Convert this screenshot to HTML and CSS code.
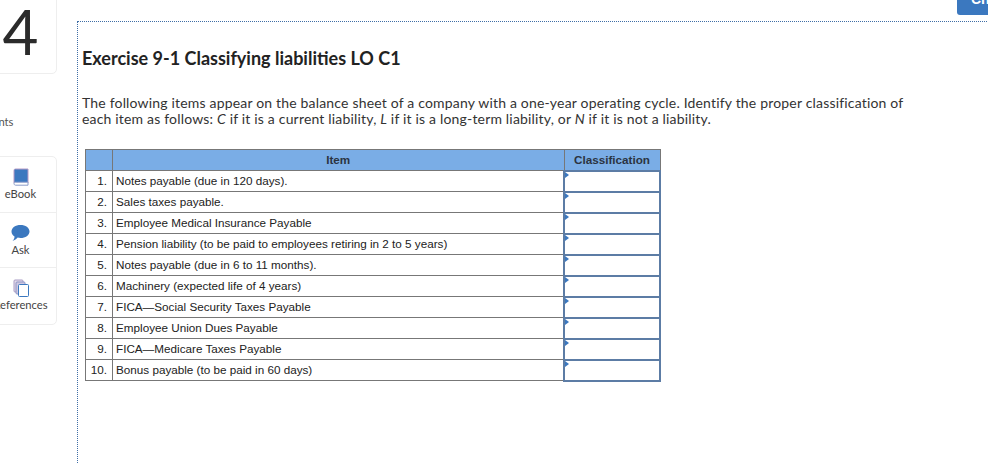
FILE: index.html
```html
<!DOCTYPE html>
<html lang="en">
<head>
<meta charset="utf-8">
<title>Exercise 9-1</title>
<link rel="stylesheet" href="styles.css">
</head>
<body>
<div class="page">
  <aside class="side">
    <div class="num-card"><span class="num">4</span></div>
    <div class="points">Points</div>
    <nav class="tools">
      <div class="tool">
        <svg class="ico" width="16" height="18" viewBox="0 0 16 18"><path d="M1 15V2.500C1 1.500 1.600 1 2.500 1H15v14z" fill="#3b78bf" stroke="#b59ac6"/><path d="M1 15.500C1 14.500 1.700 14.200 2.600 14.200H15v3H2.600C1.700 17.200 1 16.500 1 15.500z" fill="#fff" stroke="#8a9cc9"/></svg>
        <span>eBook</span>
      </div>
      <div class="tool">
        <svg class="ico" width="19" height="18" viewBox="0 0 19 18"><path d="M9.500 1C14.500 1 18.500 3.700 18.500 7.500S14.500 14 9.500 14C8.500 14 7.500 13.900 6.700 13.600C5.500 15 3.800 16.500 1.500 17C3 15.500 3.500 14 3.500 12.500C1.500 11.300.5 9.500.5 7.500.5 3.700 4.500 1 9.500 1z" fill="#3b78bf"/></svg>
        <span>Ask</span>
      </div>
      <div class="tool">
        <svg class="ico" width="16" height="18" viewBox="0 0 16 18"><rect x="1" y="1" width="9" height="12" rx="1" fill="#e4dcec" stroke="#a99cc4"/><rect x="3" y="3" width="9" height="12" rx="1" fill="#cfc8e2" stroke="#8f95c4"/><rect x="5.500" y="5.500" width="10" height="12" rx="1" fill="#fff" stroke="#3b78bf"/></svg>
        <span>References</span>
      </div>
    </nav>
  </aside>
  <main class="main">
    <h1 class="title">Exercise 9-1 Classifying liabilities LO C1</h1>
    <p class="intro">The following items appear on the balance sheet of a company with a one-year operating cycle. Identify the proper classification of each item as follows: <i>C</i> if it is a current liability, <i>L</i> if it is a long-term liability, or <i>N</i> if it is not a liability.</p>
    <table class="grid">
      <thead>
        <tr><th class="c-n"></th><th class="c-item">Item</th><th class="c-class">Classification</th></tr>
      </thead>
      <tbody>
        <tr><td class="c-n">1.</td><td>Notes payable (due in 120 days).</td><td class="ans"></td></tr>
        <tr><td class="c-n">2.</td><td>Sales taxes payable.</td><td class="ans"></td></tr>
        <tr><td class="c-n">3.</td><td>Employee Medical Insurance Payable</td><td class="ans"></td></tr>
        <tr><td class="c-n">4.</td><td>Pension liability (to be paid to employees retiring in 2 to 5 years)</td><td class="ans"></td></tr>
        <tr><td class="c-n">5.</td><td>Notes payable (due in 6 to 11 months).</td><td class="ans"></td></tr>
        <tr><td class="c-n">6.</td><td>Machinery (expected life of 4 years)</td><td class="ans"></td></tr>
        <tr><td class="c-n">7.</td><td>FICA—Social Security Taxes Payable</td><td class="ans"></td></tr>
        <tr><td class="c-n">8.</td><td>Employee Union Dues Payable</td><td class="ans"></td></tr>
        <tr><td class="c-n">9.</td><td>FICA—Medicare Taxes Payable</td><td class="ans"></td></tr>
        <tr><td class="c-n">10.</td><td>Bonus payable (to be paid in 60 days)</td><td class="ans"></td></tr>
      </tbody>
    </table>
  </main>
  <div class="corner-btn">Check</div>
</div>
</body>
</html>
```
FILE: styles.css
```css
* { box-sizing: border-box; }
html, body { margin: 0; padding: 0; background: #fff; }
body { width: 988px; height: 464px; overflow: hidden; }
.page { display: flex; width: 988px; height: 464px; overflow: hidden; position: relative; align-items: flex-start; }
.side { flex: none; width: 121px; margin-left: -44px; padding-right: 20px; font-family: Lato, "Liberation Sans", sans-serif; color: #444; }
.num-card { height: 84px; margin-top: -10px; border: 1px solid #eee; border-radius: 5px; padding: 5px 0 0 28px; display: flex; justify-content: center; }
.num { font-size: 62px; line-height: 70px; color: #2b2b2b; font-weight: 400; }
.points { font-size: 11.200px; line-height: 14px; margin-top: 41px; padding-left: 27px; color: #555; }
.tools { margin-top: 27px; border: 1px solid #eee; border-radius: 5px; }
.tool { height: 55.500px; display: flex; flex-direction: column; align-items: center; padding: 11px 0 0 28px; font-size: 11.200px; line-height: 13px; border-bottom: 1px solid #eee; color: #444; white-space: nowrap; }
.tool:last-child { border-bottom: 0; }
.ico { display: block; margin-bottom: 1px; flex: none; }
.main { flex: none; width: 944px; height: 500px; margin-top: 21px; border-top: 1px dotted #3f6ea6; border-left: 1px dotted #3f6ea6; padding: 0 0 0 4px; color: #222; }
.title { margin: 26px 0 0 0; font-family: Lato, "Liberation Sans", sans-serif; font-size: 18px; line-height: 20px; font-weight: 700; color: #222; }
.intro { margin: 27px 0 0 0; width: 845px; font-family: Lato, "Liberation Sans", sans-serif; font-size: 14px; letter-spacing: 0.180px; line-height: 16px; color: #333; }
.grid { margin: 22px 0 0 3px; width: 576px; border-collapse: collapse; table-layout: fixed; font-family: "Liberation Sans", Arial, sans-serif; font-size: 11.700px; color: #222; }
.grid th, .grid td { border: 1px solid #777; height: 21px; padding: 0 3px 0 3px; line-height: 14px; font-weight: 400; }
.grid th { background: #7aade6; font-weight: 700; text-align: center; color: #2b3442; }
.grid .c-n { width: 27px; text-align: right; padding-right: 5px; }
.c-class { width: 96px; }
.grid td.ans { border: 2px solid #5c7ca5; padding: 0; position: relative; }
.ans::before { content: ""; position: absolute; left: 0; top: 0; border-left: 4px solid #3b78bf; border-top: 3px solid transparent; border-bottom: 3px solid transparent; }
.corner-btn { position: absolute; left: 957px; top: -18px; width: 60px; height: 33px; background: #3b78bf; border-radius: 3px; color: #fff; font-family: "Liberation Sans", sans-serif; font-size: 14px; font-weight: 700; padding: 9px 0 0 14px; }
```
